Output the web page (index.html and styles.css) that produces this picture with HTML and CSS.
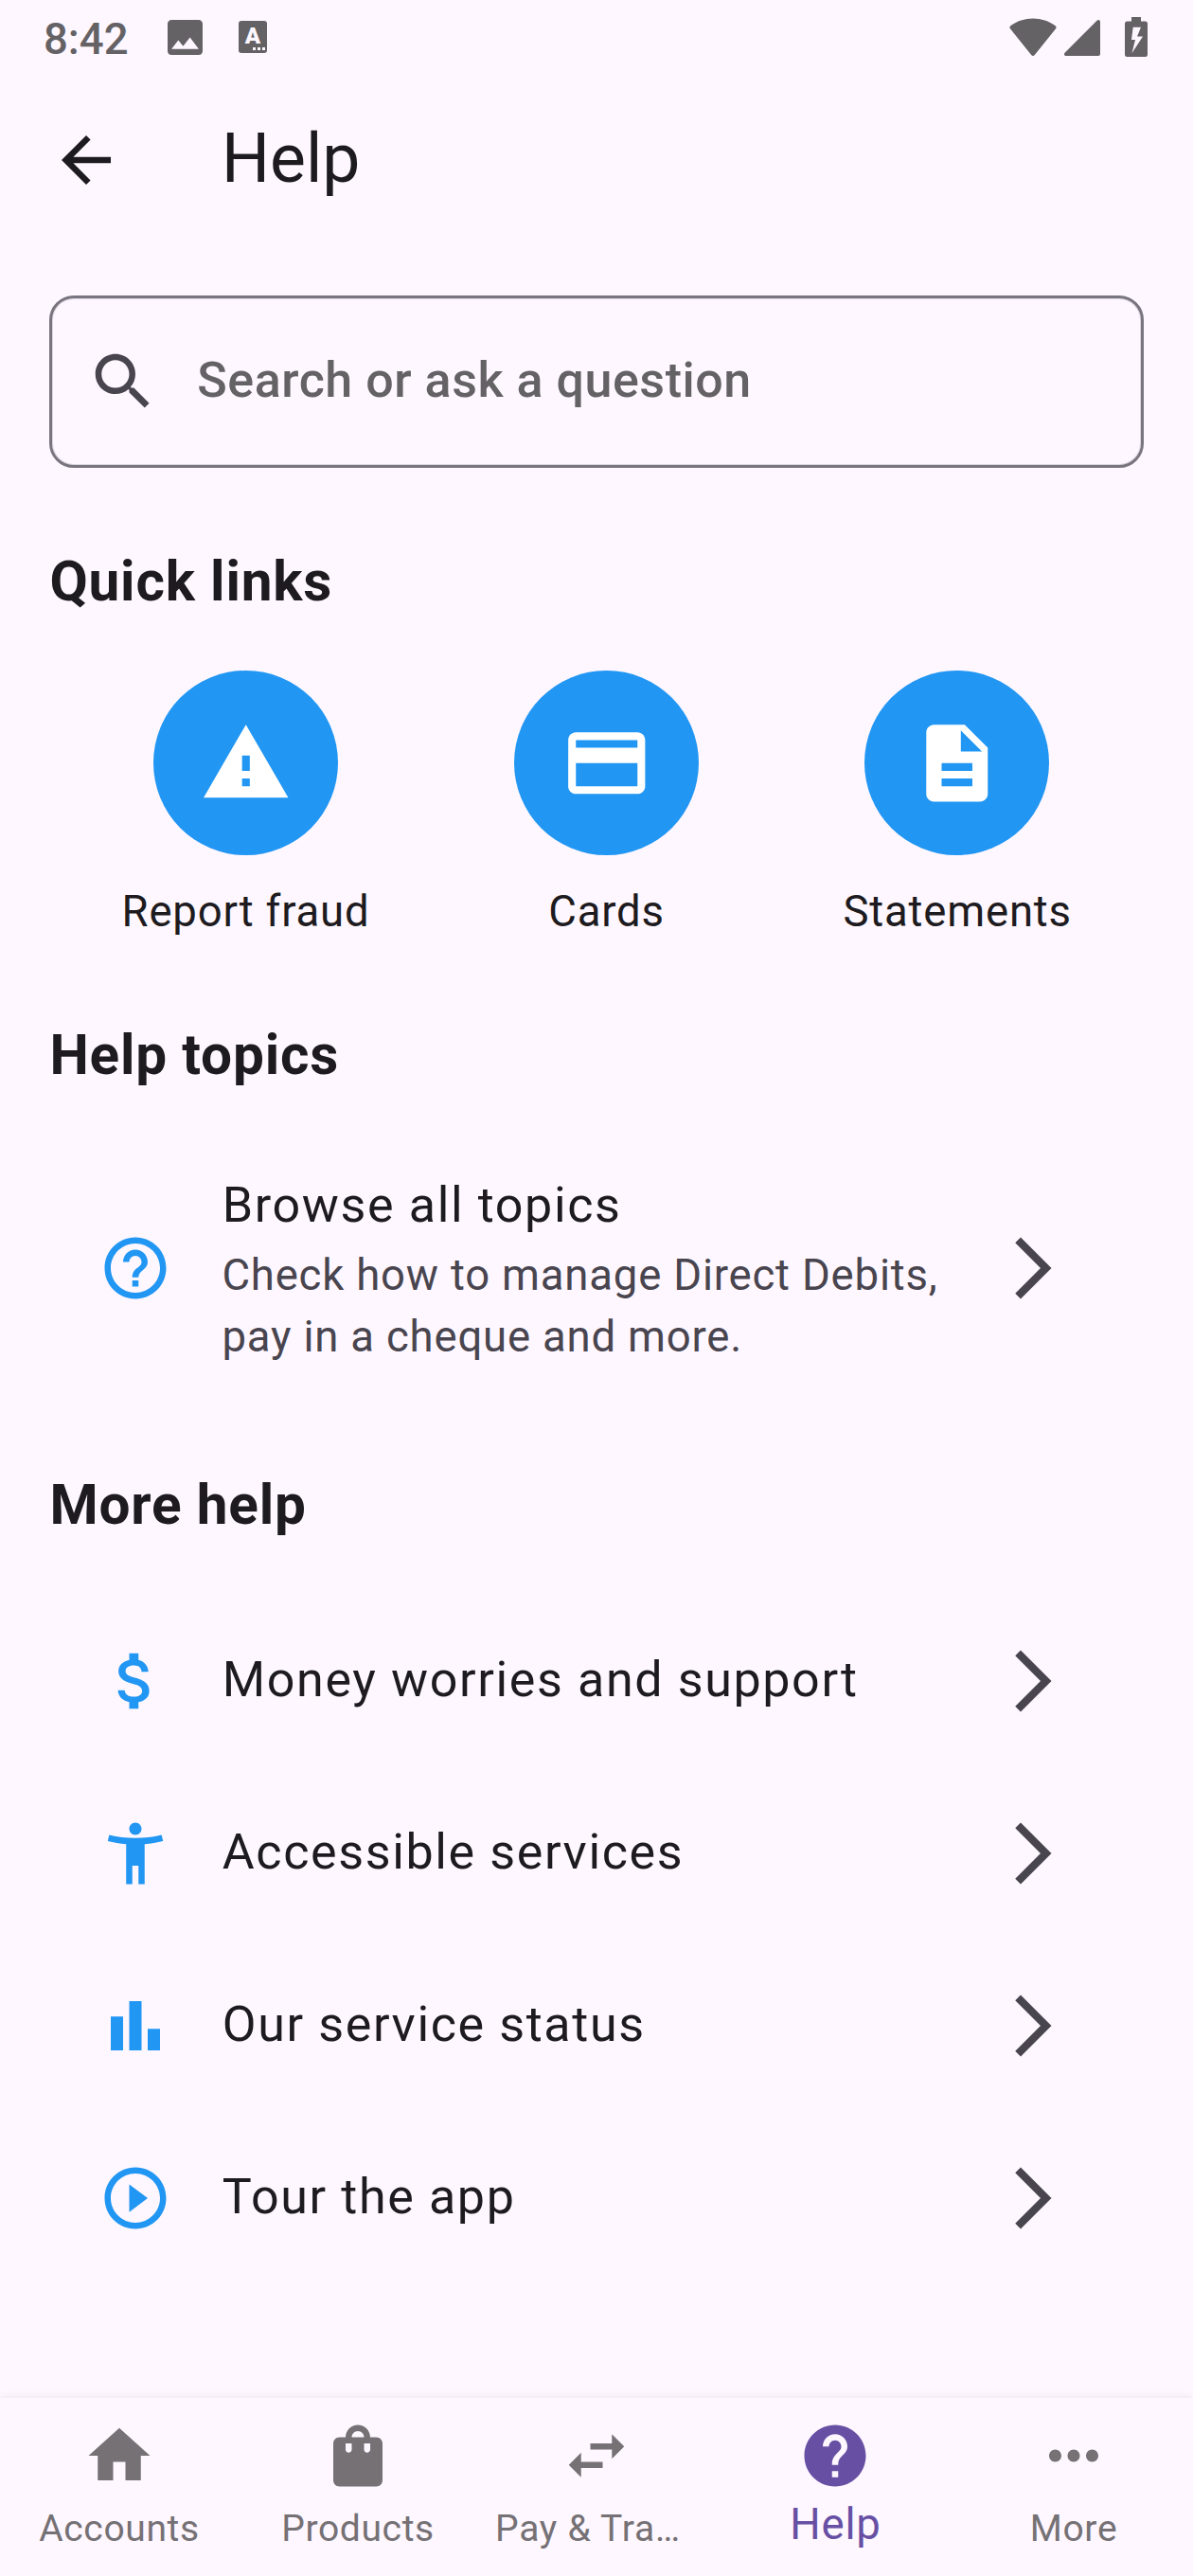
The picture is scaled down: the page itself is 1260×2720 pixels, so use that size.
FILE: index.html
```html
<!DOCTYPE html>
<html lang="en">
<head>
<meta charset="utf-8">
<title>Help</title>
<link rel="stylesheet" href="styles.css">
</head>
<body>
<div class="screen">
  <div class="status-bar">
    <span class="clock">8:42</span>
    <svg class="status-photo" viewBox="0 0 18 18"><path d="M18 16V2c0-1.1-.9-2-2-2H2C.9 0 0 .9 0 2v14c0 1.1.9 2 2 2h14c1.1 0 2-.9 2-2zM5.5 10.500l2.5 3 3.500-4.500 4.500 6H2l3.500-4.500z"/></svg>
    <div class="status-a"><span class="status-a-letter">A</span><span class="status-a-dots"><i></i><i></i><i></i></span></div>
    <svg class="status-wifi" viewBox="0 0 50 41"><path d="M1.300 8.200C8 3.300 16.400.5 25 .5s17 2.800 23.700 7.700c1 .8 1.200 2 .4 3L26.800 39c-1 1.200-2.600 1.200-3.600 0L.9 11.200c-.8-1-.6-2.200.4-3z"/></svg>
    <svg class="status-signal" viewBox="0 0 38 38"><path d="M34.500.8C36 -.6 38 .2 38 2.200V36c0 1.200-.8 2-2 2H2C.1 38-.7 36 .8 34.500z"/></svg>
    <svg class="status-battery" viewBox="0 0 24 42"><path fill-rule="evenodd" d="M7 0h10v4.500h4.500A2.500 2.500 0 0 1 24 7v32.500a2.500 2.500 0 0 1-2.500 2.500h-19A2.500 2.500 0 0 1 0 39.500V7a2.500 2.500 0 0 1 2.500-2.500H7zM8.700 10.700 7 24h4L7.500 38 19 20.500h-6L17 10.700z"/></svg>
  </div>

  <header class="app-bar">
    <svg class="icon" viewBox="0 0 24 24"><path d="M20 11H7.830l5.590-5.590L12 4l-8 8 8 8 1.410-1.410L7.830 13H20z"/></svg>
    <h1 class="app-title">Help</h1>
  </header>

  <main class="content">
    <div class="search">
      <svg class="icon" viewBox="0 0 24 24"><path d="M15.500 14h-.79l-.28-.27C15.410 12.590 16 11.110 16 9.500 16 5.910 13.090 3 9.500 3S3 5.910 3 9.500 5.910 16 9.500 16c1.610 0 3.090-.59 4.230-1.570l.27.28v.79l5 4.990L20.490 19l-4.990-5zm-6 0C7.010 14 5 11.990 5 9.500S7.010 5 9.500 5 14 7.010 14 9.500 11.990 14 9.500 14z"/></svg>
      <span class="search-hint">Search or ask a question</span>
    </div>

    <h2 class="section-title">Quick links</h2>
    <div class="quick-links">
      <div class="quick-link">
        <div class="quick-circle"><svg viewBox="0 0 24 24"><path d="M1 21h22L12 2 1 21zm12-3h-2v-2h2v2zm0-4h-2v-4h2v4z"/></svg></div>
        <span>Report fraud</span>
      </div>
      <div class="quick-link">
        <div class="quick-circle"><svg viewBox="0 0 24 24"><path d="M20 4H4c-1.110 0-1.990.89-1.990 2L2 18c0 1.110.89 2 2 2h16c1.110 0 2-.89 2-2V6c0-1.110-.89-2-2-2zm0 14H4v-6h16v6zm0-10H4V6h16v2z"/></svg></div>
        <span>Cards</span>
      </div>
      <div class="quick-link">
        <div class="quick-circle"><svg viewBox="0 0 24 24"><path d="M14 2H6c-1.100 0-1.990.9-1.990 2L4 20c0 1.100.89 2 1.990 2H18c1.100 0 2-.9 2-2V8l-6-6zm2 16H8v-2h8v2zm0-4H8v-2h8v2zm-3-5V3.500L18.500 9H13z"/></svg></div>
        <span>Statements</span>
      </div>
    </div>

    <h2 class="section-title">Help topics</h2>
    <div class="tile tile-tall">
      <svg class="icon tile-icon" viewBox="0 0 24 24"><path d="M11 18h2v-2h-2v2zm1-16C6.480 2 2 6.480 2 12s4.480 10 10 10 10-4.480 10-10S17.520 2 12 2zm0 18c-4.410 0-8-3.590-8-8s3.590-8 8-8 8 3.590 8 8-3.590 8-8 8zm0-14c-2.210 0-4 1.790-4 4h2c0-1.100.9-2 2-2s2 .9 2 2c0 2-3 1.750-3 5h2c0-2.250 3-2.500 3-5 0-2.210-1.790-4-4-4z"/></svg>
      <div class="tile-text">
        <div class="tile-title">Browse all topics</div>
        <div class="tile-subtitle">Check how to manage Direct Debits, pay in a cheque and more.</div>
      </div>
      <svg class="icon chevron" viewBox="0 0 24 24"><path d="M6.230 20.230 8 22l10-10L8 2 6.230 3.770 14.460 12z"/></svg>
    </div>

    <h2 class="section-title">More help</h2>
    <div class="tile-list">
      <div class="tile">
        <svg class="icon tile-icon" viewBox="0 0 24 24"><path d="M11.800 10.900c-2.270-.59-3-1.200-3-2.150 0-1.090 1.010-1.850 2.700-1.850 1.780 0 2.440.85 2.500 2.100h2.210c-.07-1.720-1.120-3.300-3.210-3.810V3h-3v2.160c-1.940.42-3.500 1.680-3.500 3.610 0 2.310 1.910 3.460 4.700 4.130 2.500.6 3 1.480 3 2.410 0 .69-.49 1.790-2.700 1.790-2.060 0-2.870-.92-2.980-2.100h-2.200c.12 2.190 1.760 3.420 3.680 3.830V21h3v-2.150c1.950-.37 3.500-1.500 3.500-3.550 0-2.840-2.430-3.810-4.700-4.400z"/></svg>
        <div class="tile-text"><div class="tile-title">Money worries and support</div></div>
        <svg class="icon chevron" viewBox="0 0 24 24"><path d="M6.230 20.230 8 22l10-10L8 2 6.230 3.770 14.460 12z"/></svg>
      </div>
      <div class="tile">
        <svg class="icon tile-icon" viewBox="0 0 24 24"><path d="M20.500 6c-2.610.7-5.670 1-8.500 1s-5.890-.3-8.500-1L3 8c1.860.5 4 .83 6 1v13h2v-6h2v6h2V9c2-.17 4.140-.5 6-1l-.5-2zM12 6c1.100 0 2-.9 2-2s-.9-2-2-2-2 .9-2 2 .9 2 2 2z"/></svg>
        <div class="tile-text"><div class="tile-title">Accessible services</div></div>
        <svg class="icon chevron" viewBox="0 0 24 24"><path d="M6.230 20.230 8 22l10-10L8 2 6.230 3.770 14.460 12z"/></svg>
      </div>
      <div class="tile">
        <svg class="icon tile-icon" viewBox="0 0 24 24"><path d="M4 9h4v11H4zM16 13h4v7h-4zM10 4h4v16h-4z"/></svg>
        <div class="tile-text"><div class="tile-title">Our service status</div></div>
        <svg class="icon chevron" viewBox="0 0 24 24"><path d="M6.230 20.230 8 22l10-10L8 2 6.230 3.770 14.460 12z"/></svg>
      </div>
      <div class="tile">
        <svg class="icon tile-icon" viewBox="0 0 24 24"><path d="M10 16.500l6-4.500-6-4.500v9zM12 2C6.480 2 2 6.480 2 12s4.480 10 10 10 10-4.480 10-10S17.520 2 12 2zm0 18c-4.410 0-8-3.590-8-8s3.590-8 8-8 8 3.590 8 8-3.590 8-8 8z"/></svg>
        <div class="tile-text"><div class="tile-title">Tour the app</div></div>
        <svg class="icon chevron" viewBox="0 0 24 24"><path d="M6.230 20.230 8 22l10-10L8 2 6.230 3.770 14.460 12z"/></svg>
      </div>
    </div>
  </main>

  <nav class="bottom-nav">
    <div class="nav-item">
      <svg class="icon" viewBox="0 0 24 24"><path d="M10 20v-6h4v6h5v-8h3L12 3 2 12h3v8z"/></svg>
      <span class="nav-label">Accounts</span>
    </div>
    <div class="nav-item">
      <svg class="icon" viewBox="0 0 24 24"><path d="M18 6h-2c0-2.210-1.790-4-4-4S8 3.790 8 6H6c-1.100 0-2 .9-2 2v12c0 1.100.9 2 2 2h12c1.100 0 2-.9 2-2V8c0-1.100-.9-2-2-2zm-8 4c0 .55-.45 1-1 1s-1-.45-1-1V8h2v2zm2-6c1.100 0 2 .9 2 2h-4c0-1.100.9-2 2-2zm4 6c0 .55-.45 1-1 1s-1-.45-1-1V8h2v2z"/></svg>
      <span class="nav-label">Products</span>
    </div>
    <div class="nav-item">
      <svg class="icon" viewBox="0 0 24 24"><path d="M6.990 11L3 15l3.990 4v-3H14v-2H6.990v-3zM21 9l-3.990-4v3H10v2h7.010v3L21 9z"/></svg>
      <span class="nav-label nav-label-clipped">Pay &amp; Tra…</span>
    </div>
    <div class="nav-item nav-item-active">
      <svg class="icon" viewBox="0 0 24 24"><path d="M12 2C6.480 2 2 6.480 2 12s4.480 10 10 10 10-4.480 10-10S17.520 2 12 2zm1 17h-2v-2h2v2zm2.070-7.750l-.9.920C13.450 12.900 13 13.500 13 15h-2v-.5c0-1.100.45-2.100 1.170-2.830l1.240-1.260c.37-.36.59-.86.59-1.410 0-1.100-.9-2-2-2s-2 .9-2 2H8c0-2.210 1.790-4 4-4s4 1.790 4 4c0 .88-.36 1.680-.93 2.250z"/></svg>
      <span class="nav-label">Help</span>
    </div>
    <div class="nav-item">
      <svg class="icon" viewBox="0 0 24 24"><path d="M6 10c-1.100 0-2 .9-2 2s.9 2 2 2 2-.9 2-2-.9-2-2-2zm12 0c-1.100 0-2 .9-2 2s.9 2 2 2 2-.9 2-2-.9-2-2-2zm-6 0c-1.100 0-2 .9-2 2s.9 2 2 2 2-.9 2-2-.9-2-2-2z"/></svg>
      <span class="nav-label">More</span>
    </div>
  </nav>
</div>
</body>
</html>
```
FILE: styles.css
```css
* {
  box-sizing: border-box;
}

body {
  margin: 0;
  background: #fef7ff;
  color: #1d1b20;
  font-family: Roboto, sans-serif;
}

.screen {
  width: 1260px;
  height: 2720px;
  display: flex;
  flex-direction: column;
  overflow: hidden;
}

.icon {
  width: 78px;
  height: 78px;
  flex: none;
  fill: currentColor;
}

/* Status bar */
.status-bar {
  height: 78px;
  flex: none;
  display: flex;
  align-items: center;
  padding: 0 48px 0 46px;
  color: #656266;
}

.status-bar svg {
  fill: currentColor;
  flex: none;
}

.clock {
  font-size: 45.5px;
  font-weight: 500;
  line-height: 52px;
  padding-top: 5px;
  width: 130.5px;
}

.status-photo {
  width: 37px;
  height: 37px;
}

.status-a {
  width: 30px;
  height: 34px;
  margin: 0 auto 0 38.5px;
  border-radius: 3px;
  background: currentColor;
  display: flex;
  flex-direction: column;
  align-items: center;
}

.status-a-letter {
  color: #fef7ff;
  font-size: 24px;
  font-weight: 900;
  line-height: 24px;
  height: 27px;
  padding-top: 4px;
}

.status-a-dots {
  display: flex;
  gap: 2px;
  align-self: flex-end;
  padding: 1px 2px 0 0;
}

.status-a-dots i {
  width: 3px;
  height: 3px;
  background: #fef7ff;
}

.status-wifi {
  width: 50px;
  height: 41px;
  margin-right: 8.5px;
}

.status-signal {
  width: 38px;
  height: 38px;
  margin: 2px 26px 0 0;
}

.status-battery {
  width: 24px;
  height: 42px;
}

/* App bar */
.app-bar {
  height: 182px;
  flex: none;
  display: flex;
  align-items: center;
  gap: 104px;
  padding: 0 52px;
}

.app-title {
  margin: 0;
  font-size: 71.5px;
  font-weight: 400;
  line-height: 91px;
  padding-bottom: 4px;
}

/* Content */
.content {
  flex: 1;
  padding: 52px 52px 0;
}

.search {
  height: 182px;
  display: flex;
  align-items: center;
  gap: 39px;
  padding: 0 36px;
  border: 3px solid #79747e;
  border-radius: 26px;
  box-shadow: inset 0 0 0 1px rgba(121, 116, 126, 0.25);
  color: #49454f;
}

.search-hint {
  color: #656266;
  font-size: 52px;
  font-weight: 500;
  line-height: 78px;
  letter-spacing: 0.53px;
  padding: 0 0 2px 0.25px;
}

.section-title {
  margin: 81px 0 55px;
  padding-left: 0.4px;
  font-size: 58.5px;
  font-weight: 700;
  line-height: 78px;
  letter-spacing: 0.81px;
}

.quick-links {
  height: 286px;
  display: flex;
  justify-content: space-around;
  font-size: 45.5px;
  line-height: 65px;
  letter-spacing: 0.81px;
}

.quick-link {
  display: flex;
  flex-direction: column;
  align-items: center;
  gap: 26.5px;
}

.quick-link span {
  padding-left: 0.4px;
}

.quick-circle {
  width: 195px;
  height: 195px;
  flex: none;
  border-radius: 50%;
  background: #2196f3;
  display: flex;
  align-items: center;
  justify-content: center;
}

.quick-circle svg {
  width: 97.5px;
  height: 97.5px;
  fill: #fff;
}

.tile {
  height: 182px;
  display: flex;
  align-items: center;
  gap: 52px;
  padding: 0 78px 0 52px;
}

.tile-tall {
  height: 286px;
  margin: -12px 0 -13px;
}

.tile-list {
  padding-top: 1px;
}

.tile-list .tile-text {
  padding-bottom: 3px;
}

.tile-icon {
  color: #2196f3;
}

.chevron {
  color: #49454f;
}

.tile-text {
  flex: 1;
}

.tile-title {
  padding-left: 0.8px;
  font-size: 52px;
  line-height: 78px;
  letter-spacing: 1.625px;
}

.tile-subtitle {
  color: #49454f;
  font-size: 45.5px;
  line-height: 65px;
  letter-spacing: 0.81px;
  padding: 2px 0 0 0.4px;
}

/* Bottom navigation */
.bottom-nav {
  height: 188px;
  flex: none;
  display: flex;
  box-shadow: 0 -1px 8px rgba(0, 0, 0, 0.07);
  color: #757175;
}

.nav-item {
  flex: 1 1 0;
  min-width: 0;
  display: flex;
  flex-direction: column;
  align-items: center;
  padding-top: 21.5px;
}

.nav-label {
  font-size: 39px;
  line-height: 52px;
  letter-spacing: 0.65px;
  padding-top: 12.5px;
}

.nav-label-clipped {
  width: 214px;
  letter-spacing: 0.75px;
}

.nav-item-active {
  color: #6750a4;
}

.nav-item-active .nav-label {
  font-size: 45.5px;
  letter-spacing: 0.8px;
  padding: 8.5px 0 0 1px;
}
```
